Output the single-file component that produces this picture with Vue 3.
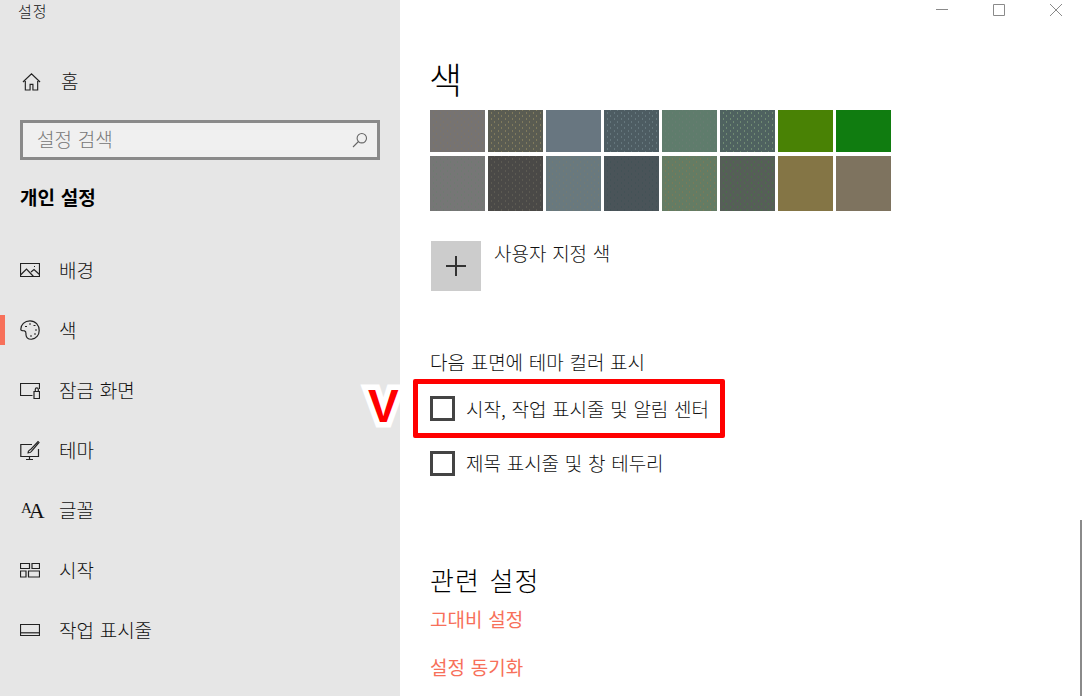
<template>
  <div class="settings">
    <aside class="sidebar">
      <div class="app-title">설정</div>
      <div class="home-row">
        <svg class="icon" viewBox="0 0 20 20"><path d="M1 10.500 10 2l9 8.500M3.500 8v11h5v-6h3v6h5V8" /></svg>
        <span>홈</span>
      </div>
      <div class="search">
        <span class="search-text">설정 검색</span>
        <svg class="search-icon" viewBox="0 0 16 16"><circle cx="9.800" cy="6.200" r="4.700" /><path d="M6.500 9.500 1 15" /></svg>
      </div>
      <div class="group-title">개인 설정</div>
      <nav class="nav">
        <div v-for="item in navItems" :key="item.label" class="nav-item" :class="{ active: item.active }">
          <svg class="icon" viewBox="0 0 20 20">
            <path v-for="d in item.paths" :key="d" :d="d" />
          </svg>
          <span v-if="item.glyph" class="font-glyph"><small>A</small>A</span>
          <span>{{ item.label }}</span>
        </div>
      </nav>
    </aside>

    <main class="content">
      <div class="window-controls">
        <svg viewBox="0 0 12 12"><path d="M0 5.500h12" /></svg>
        <svg viewBox="0 0 12 12"><path d="M.5.5h11v11H.5z" /></svg>
        <svg viewBox="0 0 12 12"><path d="M0 0l12 12M12 0 0 12" /></svg>
      </div>

      <h1>색</h1>

      <div class="swatches">
        <div
          v-for="s in swatches"
          :key="s.color"
          class="swatch"
          :class="{ plain: !s.dot }"
          :style="{ '--base': s.color, '--dot': s.dot }"
        ></div>
      </div>

      <div class="custom-color">
        <div class="plus">
          <svg viewBox="0 0 20 20"><path d="M10 0v20M0 10h20" /></svg>
        </div>
        <span>사용자 지정 색</span>
      </div>

      <div class="surface-title">다음 표면에 테마 컬러 표시</div>
      <div class="check-row marked">
        <span class="v-mark">V</span>
        <span class="checkbox"></span>
        <span>시작, 작업 표시줄 및 알림 센터</span>
      </div>
      <div class="check-row">
        <span class="checkbox"></span>
        <span>제목 표시줄 및 창 테두리</span>
      </div>

      <h2>관련 설정</h2>
      <a class="link first">고대비 설정</a>
      <a class="link">설정 동기화</a>

      <div class="scrollbar"></div>
    </main>
  </div>
</template>

<script setup>
const navItems = [
  { label: '배경', paths: ['M.5 3.500h19v13H.5z', 'M.5 15l6-6 7 7.500', 'M11 12l3-2.500 5.500 5', 'M14 6.500h1'] },
  {
    label: '색',
    active: true,
    paths: [
      'M10 .8C4.500.8.800 4.800.800 9.200c0 2 2.400 1.400 3.700 1.600 2 .4 1.300 2.400 1.500 4.200.3 3 3 4.400 5.800 4.200 4.200-.4 7.400-4 7.400-8.700C19.200 5 15.500.8 10 .8z',
      'M5 6.500h2M9 4h2M13.500 5.500h2M15 10h2M14 14h2M10 16h2'
    ]
  },
  { label: '잠금 화면', paths: ['M19.500 9V3.500H.5v12h12', 'M14 11.500h5.500v7H14z', 'M15.300 11.500V9.300c0-2 3-2 3 0v2.200'] },
  {
    label: '테마',
    paths: ['M12 4.500H.8v12h17.700V9', 'M9.500 16.500v2.500M6 19.500h7', 'M8 13c0-3 2-2.500 3-4l7-7.500 1 1-6.500 7.500c-1 1.500-1 3-4.500 3z']
  },
  { label: '글꼴', paths: [], glyph: true },
  { label: '시작', paths: ['M.5 3.500h9v5h-9zM12 3.500h7.500v5H12zM.5 11h5.500v6H.5zM8.500 11h11v6h-11z'] },
  { label: '작업 표시줄', paths: ['M.5 4.500h19v11H.5z', 'M.5 12.800h19'] }
]

const swatches = [
  { color: '#767372', dot: '#7c7468' },
  { color: '#5a5c52', dot: '#807a5c' },
  { color: '#687680', dot: '' },
  { color: '#4d5c62', dot: '#64767c' },
  { color: '#5f7c6c', dot: '#667c70' },
  { color: '#4f6260', dot: '#6f8a72' },
  { color: '#498205', dot: '' },
  { color: '#107c10', dot: '' },
  { color: '#767676', dot: '#6e7a70' },
  { color: '#4a4947', dot: '#5c5a52' },
  { color: '#69797e', dot: '#727a74' },
  { color: '#4a5459', dot: '#435256' },
  { color: '#647c64', dot: '#7a7a58' },
  { color: '#565e58', dot: '#4a7048' },
  { color: '#847545', dot: '' },
  { color: '#7e735f', dot: '' }
]
</script>

<style>
html,
body {
  margin: 0;
  overflow: hidden;
}
</style>

<style scoped>
.settings {
  display: flex;
  width: 1084px;
  height: 696px;
  overflow: hidden;
  background: #fff;
  color: #111;
  font-family: "Noto Sans CJK KR", "Noto Sans", sans-serif;
  font-size: 19px;
  font-weight: 300;
  line-height: 24px;
  word-spacing: 1.5px;
}

.sidebar {
  flex: 0 0 400px;
  display: flex;
  flex-direction: column;
  background: #e6e6e6;
}

.app-title {
  height: 20px;
  padding-left: 18px;
  font-size: 15px;
  line-height: 22px;
  letter-spacing: 1px;
}

.icon {
  flex: 0 0 20px;
  width: 20px;
  height: 20px;
  fill: none;
  stroke: #222;
  stroke-width: 1.2;
}

.home-row {
  display: flex;
  align-items: center;
  gap: 20px;
  margin: 49px 0 0 22px;
  height: 24px;
}

.home-row .icon {
  width: 19px;
  height: 19px;
  flex-basis: 19px;
}

.search {
  display: flex;
  align-items: center;
  justify-content: space-between;
  box-sizing: border-box;
  width: 360px;
  height: 40px;
  margin: 27px 0 0 20px;
  padding: 0 9px 0 14px;
  border: 3px solid #8a8a8a;
  background: #f0f0f0;
  color: #767676;
}

.search-text {
  margin-bottom: 3px;
}

.search-icon {
  width: 16px;
  height: 16px;
  fill: none;
  stroke: #666;
  stroke-width: 1.1;
}

.group-title {
  margin: 25px 0 0 20px;
  font-weight: 700;
  color: #000;
}

.nav {
  display: flex;
  flex-direction: column;
  margin-top: 31px;
}

.nav-item {
  position: relative;
  display: flex;
  align-items: center;
  gap: 19px;
  height: 60px;
  padding-left: 20px;
}

.nav-item.active::before {
  content: "";
  position: absolute;
  left: 0;
  top: 15px;
  width: 5px;
  height: 30px;
  background: #f7705a;
}

.font-glyph {
  position: absolute;
  left: 21px;
  top: 21px;
  font-family: "Liberation Serif", serif;
  font-size: 22px;
  font-weight: 400;
  line-height: 20px;
  letter-spacing: -1px;
}

.font-glyph small {
  position: relative;
  top: -5px;
  margin-right: -2px;
  font-size: 15px;
}

.content {
  position: relative;
  flex: 1;
  padding-left: 30px;
}

.window-controls {
  display: flex;
  justify-content: flex-end;
  gap: 45px;
  padding: 4px 22px 0 0;
  height: 16px;
}

.window-controls svg {
  width: 12px;
  height: 12px;
  fill: none;
  stroke: #8a8a8a;
  stroke-width: 1;
}

h1 {
  margin: 36px 0 0 -1px;
  font-size: 36px;
  font-weight: 300;
  line-height: 44px;
  color: #000;
}

.swatches {
  display: grid;
  grid-template-columns: repeat(8, 55px);
  grid-template-rows: 42px 55px;
  gap: 4px 3px;
  margin-top: 10px;
}

.swatch {
  background-color: var(--base);
  background-image:
    radial-gradient(circle, var(--dot) .6px, transparent 1px),
    radial-gradient(circle, var(--dot) .6px, transparent 1px);
  background-position: 0 0, 3px 3px;
  background-size: 7px 6px;
}

.swatch.plain {
  background-image: none;
}

.custom-color {
  display: flex;
  gap: 13px;
  margin: 30px 0 0 1px;
}

.plus {
  display: flex;
  align-items: center;
  justify-content: center;
  width: 50px;
  height: 50px;
  background: #ccc;
}

.plus svg {
  width: 20px;
  height: 20px;
  fill: none;
  stroke: #333;
  stroke-width: 2;
}

.surface-title {
  margin-top: 59px;
}

.check-row {
  position: relative;
  display: flex;
  align-items: center;
  gap: 11px;
  height: 24px;
  margin-top: 13px;
}

.check-row.marked {
  margin-top: 5px;
  margin-left: -17px;
  width: 312px;
  height: 59px;
  box-sizing: border-box;
  padding-left: 12px;
  border: 5px solid #f00;
  border-radius: 2px;
}

.checkbox {
  flex: 0 0 auto;
  box-sizing: border-box;
  width: 25px;
  height: 25px;
  border: 3px solid #444;
}

.v-mark {
  position: absolute;
  left: -50px;
  top: -1px;
  font-family: "Liberation Sans", sans-serif;
  font-size: 46px;
  font-weight: 700;
  line-height: 46px;
  color: #f00;
  -webkit-text-stroke: 11px #fff;
  paint-order: stroke fill;
}

h2 {
  margin: 89px 0 0;
  font-size: 26px;
  font-weight: 300;
  line-height: 32px;
  letter-spacing: 1px;
  word-spacing: 3px;
  color: #000;
}

.link {
  display: block;
  width: fit-content;
  font-weight: 400;
  color: #f7705a;
}

.link.first {
  margin-top: 11px;
}

.link + .link {
  margin-top: 24px;
}

.scrollbar {
  position: absolute;
  right: 2px;
  top: 520px;
  bottom: 0;
  width: 2px;
  background: #8a8a8a;
}
</style>
